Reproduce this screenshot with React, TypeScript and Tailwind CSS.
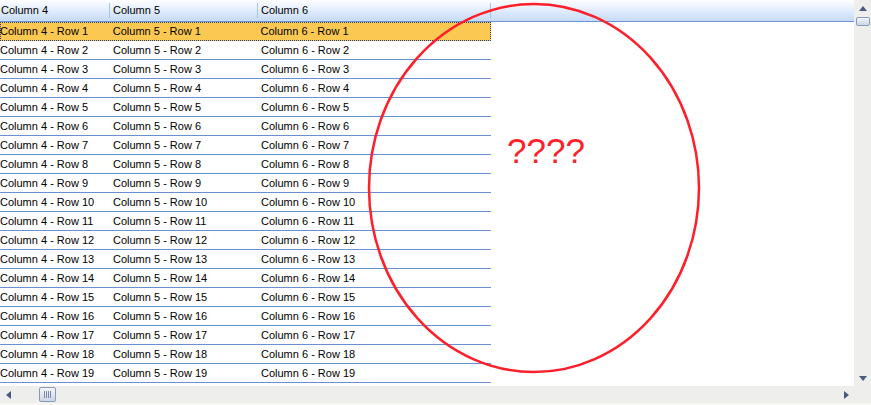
import React from 'react';

const rows = Array.from({ length: 20 }, (_, i) => i + 1);

function Arrow({ dir }: { dir: 'up' | 'down' | 'left' | 'right' }) {
  const pts = {
    up: '0,5 4,0 8,5',
    down: '0,0 8,0 4,5',
    left: '5,0 5,8 0,4',
    right: '0,0 5,4 0,8',
  }[dir];
  const w = dir === 'up' || dir === 'down' ? 8 : 5;
  const h = dir === 'up' || dir === 'down' ? 5 : 8;
  return (
    <svg width={w} height={h} viewBox={`0 0 ${w} ${h}`}>
      <polygon points={pts} fill="#4a5a80" />
    </svg>
  );
}

export default function App() {
  return (
    <div className="relative w-[871px] h-[405px] bg-white overflow-hidden flex flex-col text-[11px] text-black" style={{ fontFamily: '"Liberation Sans", Arial, sans-serif' }}>
      <div className="flex flex-1 min-h-0">
        <div className="flex-1 overflow-hidden">
          <div className="flex h-[22px] border-b border-[#6b95d6] bg-gradient-to-b from-[#fdfeff] to-[#c6dbf9]">
            <div className="w-[110px] flex items-center pl-[1px] relative">
              Column 4
              <span className="absolute right-0 top-[3px] h-[15px] w-px bg-[#a4c4ef]" />
            </div>
            <div className="w-[148px] flex items-center pl-[3px] relative">
              Column 5
              <span className="absolute right-0 top-[3px] h-[15px] w-px bg-[#a4c4ef]" />
            </div>
            <div className="w-[233px] flex items-center pl-[3px] relative">
              Column 6
              <span className="absolute right-0 top-[3px] h-[15px] w-px bg-[#a4c4ef]" />
            </div>
          </div>
          {rows.map((r) => (
            <div
              key={r}
              className={
                r === 1
                  ? 'flex w-[491px] h-[19px] bg-[#fbc852] border border-dotted border-[#1c3a8c]'
                  : 'flex w-[491px] h-[19px] border-b border-[#6a91cf]'
              }
            >
              <div className={r === 1 ? 'w-[110px] flex items-center -ml-px' : 'w-[110px] flex items-center'}>Column 4 - Row {r}</div>
              <div className="w-[148px] flex items-center pl-[3px]">Column 5 - Row {r}</div>
              <div className="w-[233px] flex items-center pl-[3px]">Column 6 - Row {r}</div>
            </div>
          ))}
        </div>
        <div className="w-[17px] bg-[#eeeeec] flex flex-col items-center">
          <div className="h-[16px] flex items-center justify-center"><Arrow dir="up" /></div>
          <div className="mt-px w-[14px] h-[9px] rounded-[2px] border border-[#8a9ab8] bg-gradient-to-b from-[#f4f6fa] to-[#cdd6e6]" />
          <div className="flex-1" />
          <div className="h-[16px] flex items-center justify-center"><Arrow dir="down" /></div>
        </div>
      </div>
      <div className="h-[17px] flex bg-[#eeeeec]">
        <div className="flex-1 flex items-center">
          <div className="w-[16px] flex justify-center"><Arrow dir="left" /></div>
          <div className="ml-[23px] w-[17px] h-[15px] rounded-[2px] border border-[#8a9ab8] bg-gradient-to-b from-[#f4f6fa] to-[#cdd6e6] flex items-center justify-center gap-px">
            <span className="w-px h-[7px] bg-[#7a8aa8]" />
            <span className="w-px h-[7px] bg-[#7a8aa8]" />
            <span className="w-px h-[7px] bg-[#7a8aa8]" />
            <span className="w-px h-[7px] bg-[#7a8aa8]" />
          </div>
          <div className="flex-1" />
          <div className="w-[16px] flex justify-center"><Arrow dir="right" /></div>
        </div>
        <div className="w-[17px]" />
      </div>
      <div className="h-[2px] bg-[#f7f7f2]" />

      <svg className="absolute left-0 top-0 pointer-events-none" width="871" height="405">
        <ellipse cx="534" cy="188" rx="165" ry="184" fill="none" stroke="#ff1f2a" strokeWidth="2.5" />
      </svg>
      <div className="absolute left-[507px] top-[131px] text-[35px] leading-[40px] text-[#ff1f2a]">????</div>
    </div>
  );
}
